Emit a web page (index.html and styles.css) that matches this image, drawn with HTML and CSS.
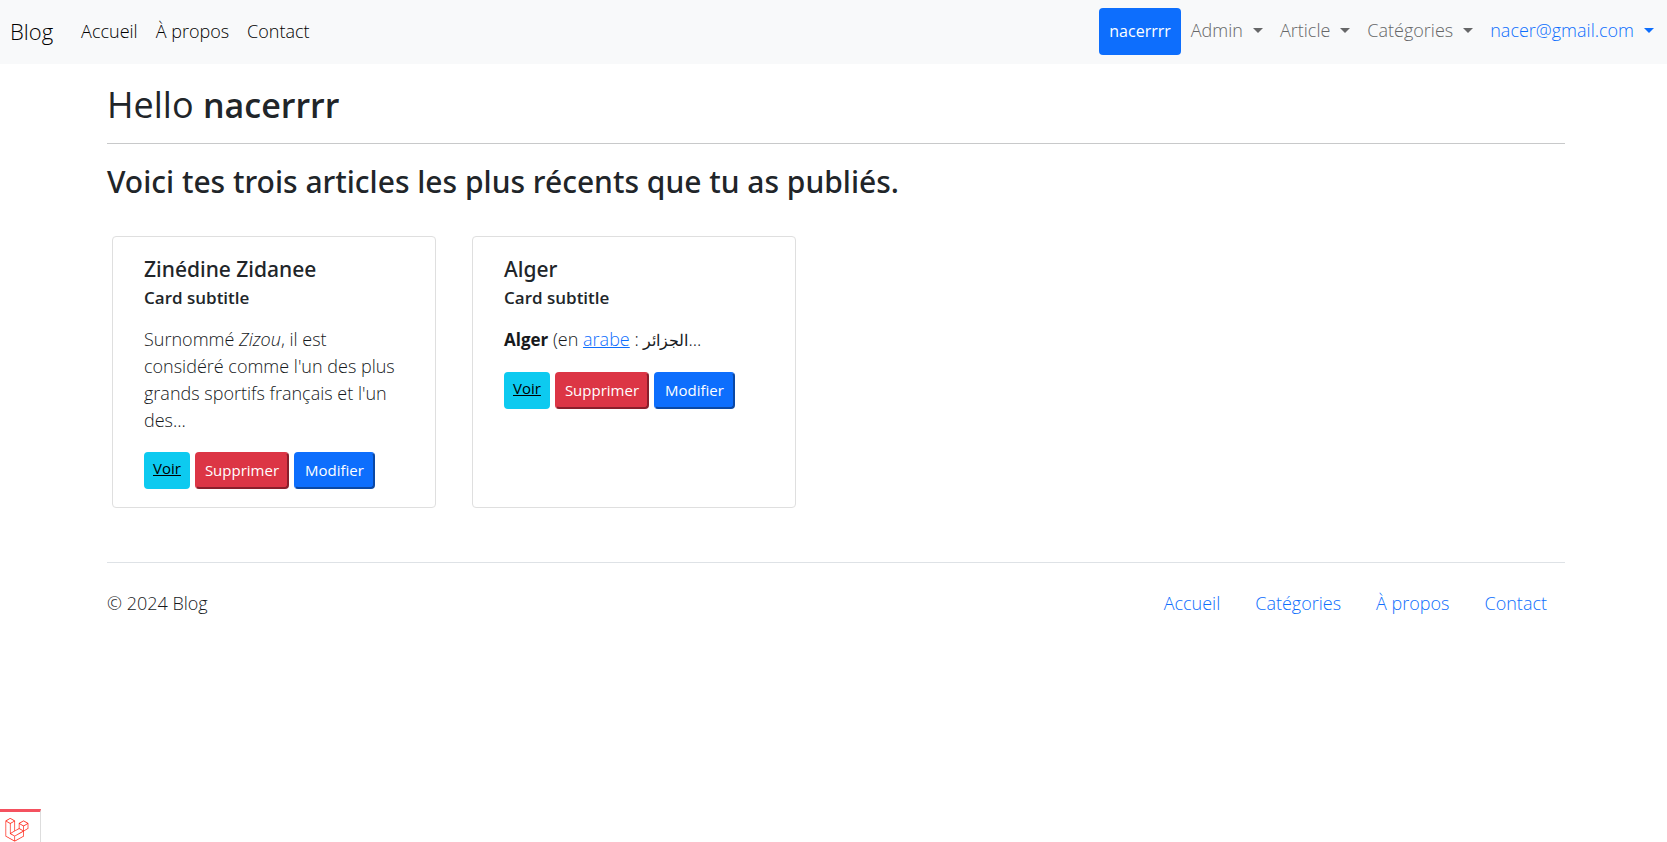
FILE: index.html
```html
<!DOCTYPE html>
<html lang="fr">
<head>
<meta charset="utf-8">
<title>Blog</title>
<link rel="stylesheet" href="styles.css">
</head>
<body>
<header class="navbar">
  <a class="brand" href="#">Blog</a>
  <nav class="nav-main">
    <a href="#">Accueil</a>
    <a href="#">À propos</a>
    <a href="#">Contact</a>
  </nav>
  <div class="nav-user">
    <button class="btn-user" type="button">nacerrrr</button>
    <button class="dropdown" type="button">Admin</button>
    <button class="dropdown" type="button">Article</button>
    <button class="dropdown" type="button">Catégories</button>
    <button class="dropdown dropdown-account" type="button">nacer@gmail.com</button>
  </div>
</header>
<main class="container">
  <h1 class="hello">Hello <strong>nacerrrr</strong></h1>
  <hr class="rule">
  <h2 class="intro">Voici tes trois articles les plus récents que tu as publiés.</h2>
  <section class="cards">
    <article class="card">
      <h3 class="card-title">Zinédine Zidanee</h3>
      <h4 class="card-subtitle">Card subtitle</h4>
      <p class="card-text">Surnommé <em>Zizou</em>, il est considéré comme l'un des plus grands sportifs français et l'un des...</p>
      <div class="actions">
        <a class="btn btn-view" href="#">Voir</a>
        <button class="btn btn-delete" type="button">Supprimer</button>
        <button class="btn btn-edit" type="button">Modifier</button>
      </div>
    </article>
    <article class="card">
      <h3 class="card-title">Alger</h3>
      <h4 class="card-subtitle">Card subtitle</h4>
      <p class="card-text"><strong>Alger</strong> (en <a href="#">arabe</a> : <span class="arabic" lang="ar">الجزائر</span>...</p>
      <div class="actions">
        <a class="btn btn-view" href="#">Voir</a>
        <button class="btn btn-delete" type="button">Supprimer</button>
        <button class="btn btn-edit" type="button">Modifier</button>
      </div>
    </article>
  </section>
</main>
<footer class="container">
  <div class="footer">
    <span>© 2024 Blog</span>
    <nav class="footer-nav">
      <a href="#">Accueil</a>
      <a href="#">Catégories</a>
      <a href="#">À propos</a>
      <a href="#">Contact</a>
    </nav>
  </div>
</footer>
<a class="debugbar" href="#" aria-label="Laravel">
  <svg width="24" height="24" viewBox="0 0 50 52"><path fill="#ff2d20" d="M49.626 11.564a.809.809 0 0 1 .028.209v10.972a.8.8 0 0 1-.402.694l-9.209 5.302V39.25c0 .286-.152.55-.4.694L20.42 51.01c-.044.025-.092.041-.14.058-.018.006-.035.017-.054.022a.805.805 0 0 1-.41 0c-.022-.006-.042-.018-.063-.026-.044-.016-.09-.03-.132-.054L.402 39.944A.801.801 0 0 1 0 39.25V6.334c0-.072.01-.142.028-.21.006-.023.02-.044.028-.067.015-.042.029-.085.051-.124.015-.026.037-.047.055-.071.023-.032.044-.065.071-.093.023-.023.053-.04.079-.06.029-.024.055-.05.088-.069h.001l9.61-5.533a.802.802 0 0 1 .8 0l9.61 5.533h.002c.032.02.059.045.088.068.026.02.055.038.078.06.028.029.048.062.072.094.017.024.04.045.054.071.023.04.036.082.052.124.008.023.022.044.028.068a.809.809 0 0 1 .028.209v20.559l8.008-4.611v-10.51c0-.07.01-.141.028-.208.007-.024.02-.045.028-.068.016-.042.03-.085.052-.124.015-.026.037-.047.054-.071.024-.032.044-.065.072-.093.023-.023.052-.04.078-.06.03-.024.056-.05.088-.069h.001l9.611-5.533a.801.801 0 0 1 .8 0l9.61 5.533c.034.02.06.045.09.068.025.02.054.038.077.06.028.029.048.062.072.094.018.024.04.045.054.071.023.039.036.082.052.124.009.023.022.044.028.068zm-1.574 10.718v-9.124l-3.363 1.936-4.646 2.675v9.124l8.01-4.611zm-9.61 16.505v-9.13l-4.57 2.61-13.05 7.448v9.216l17.62-10.144zM1.602 7.719v31.068L19.22 48.93v-9.214l-9.204-5.209-.003-.002-.004-.002c-.031-.018-.057-.044-.086-.066-.025-.02-.054-.036-.076-.058l-.002-.003c-.026-.025-.044-.056-.066-.084-.02-.027-.044-.05-.06-.078l-.001-.003c-.018-.03-.029-.066-.042-.1-.013-.03-.03-.058-.038-.09v-.001c-.01-.038-.012-.078-.016-.117-.004-.03-.012-.06-.012-.09V12.33L4.965 9.654 1.602 7.72zm8.81-5.994L2.405 6.334l8.005 4.609 8.006-4.61-8.006-4.608zm4.164 28.764l4.645-2.674V7.719l-3.363 1.936-4.646 2.675v20.096l3.364-1.937zM39.243 7.164l-8.006 4.609 8.006 4.609 8.005-4.61-8.005-4.608zm-.801 10.605l-4.646-2.675-3.363-1.936v9.124l4.645 2.674 3.364 1.937v-9.124zM20.02 38.33l11.743-6.704 5.87-3.35-8-4.606-9.211 5.303-8.395 4.833 7.993 4.524z"/></svg>
</a>
</body>
</html>
```
FILE: styles.css
```css
* { box-sizing: border-box; }
body {
  margin: 0;
  background: #fff;
  color: #16191c;
  font-family: "Open Sans", "DejaVu Sans", sans-serif;
  font-size: 18px;
  font-weight: 300;
  line-height: 27px;
}
a { color: #0d6efd; }
button { font: inherit; }
h1, h2, h3, h4, p { margin: 0; }
h1, h2, h3, h4 { color: #212529; }
.navbar {
  display: flex;
  align-items: center;
  min-height: 64px;
  padding: 0 13px 1px 10px;
  background: #f8f9fa;
}
.brand { margin-right: 28px; color: #000; font-size: 22px; text-decoration: none; }
.nav-main { display: flex; gap: 18px; }
.nav-main a { color: #000; text-decoration: none; }
.nav-user { display: flex; align-items: center; gap: 17px; margin-left: auto; }
.btn-user {
  height: 47px;
  margin-right: -7px;
  padding: 0 10px;
  border: 0;
  border-radius: 4px;
  background: #0d6efd;
  color: #fff;
  font-size: 16px;
  font-weight: 400;
}
.dropdown {
  display: flex;
  align-items: center;
  gap: 10px;
  padding: 0 0 3px;
  border: 0;
  background: none;
  color: #666768;
}
.dropdown::after {
  content: "";
  border: 5px solid transparent;
  border-top-color: currentColor;
  border-bottom: 0;
}
.dropdown-account { color: #0d6efd; }
.container { padding: 0 102px 0 107px; }
.hello { padding-top: 19px; font-size: 36px; font-weight: 400; line-height: 43px; }
.hello strong { font-size: 34px; font-weight: 600; }
.rule { margin: 16px 0; border: 0; border-top: 1px solid #c8c9ca; }
.intro { font-family: "Noto Sans", sans-serif; font-size: 30px; font-weight: 500; line-height: 43px; }
.cards { display: flex; gap: 36px; padding: 33px 5px 0; }
.card {
  width: 324px;
  padding: 18px 31px;
  border: 1px solid #dfdfdf;
  border-radius: 4px;
}
.card-title { font-family: "Noto Sans", sans-serif; font-size: 21px; font-weight: 500; line-height: 28px; }
.card-subtitle { padding-top: 4px; font-size: 17px; font-weight: 600; line-height: 22px; }
.card-text { margin: 17px 0 18px; }
.card-text strong { font-size: 17px; font-weight: 700; }
.arabic { font-size: 16px; }
.actions { display: flex; gap: 5px; }
.btn {
  height: 37px;
  border: 2px solid transparent;
  border-radius: 4px;
  color: #fff;
  font-size: 15px;
  font-weight: 400;
  white-space: nowrap;
}
.btn-view { padding: 1px 7px; background: #0dcaf0; border-color: #0dcaf0; color: #000; }
.btn-delete { padding: 0 8px; background: #dc3545; border-color: #dc3545 #8a1f2b #8a1f2b #dc3545; }
.btn-edit { padding: 0 9px; background: #0d6efd; border-color: #0d6efd #0a48a5 #0a48a5 #0d6efd; }
.footer {
  display: flex;
  align-items: center;
  justify-content: space-between;
  margin-top: 54px;
  padding: 27px 18px 27px 0;
  border-top: 1px solid #dee2e6;
}
.footer-nav { display: flex; gap: 35px; }
.footer-nav a { text-decoration: none; }
.debugbar {
  position: fixed;
  bottom: 0;
  left: 0;
  width: 41px;
  height: 33px;
  padding: 6px 5px;
  border-top: 3px solid #f4515f;
  border-right: 1px solid #ddd;
  background: #fff;
  line-height: 0;
}
```
